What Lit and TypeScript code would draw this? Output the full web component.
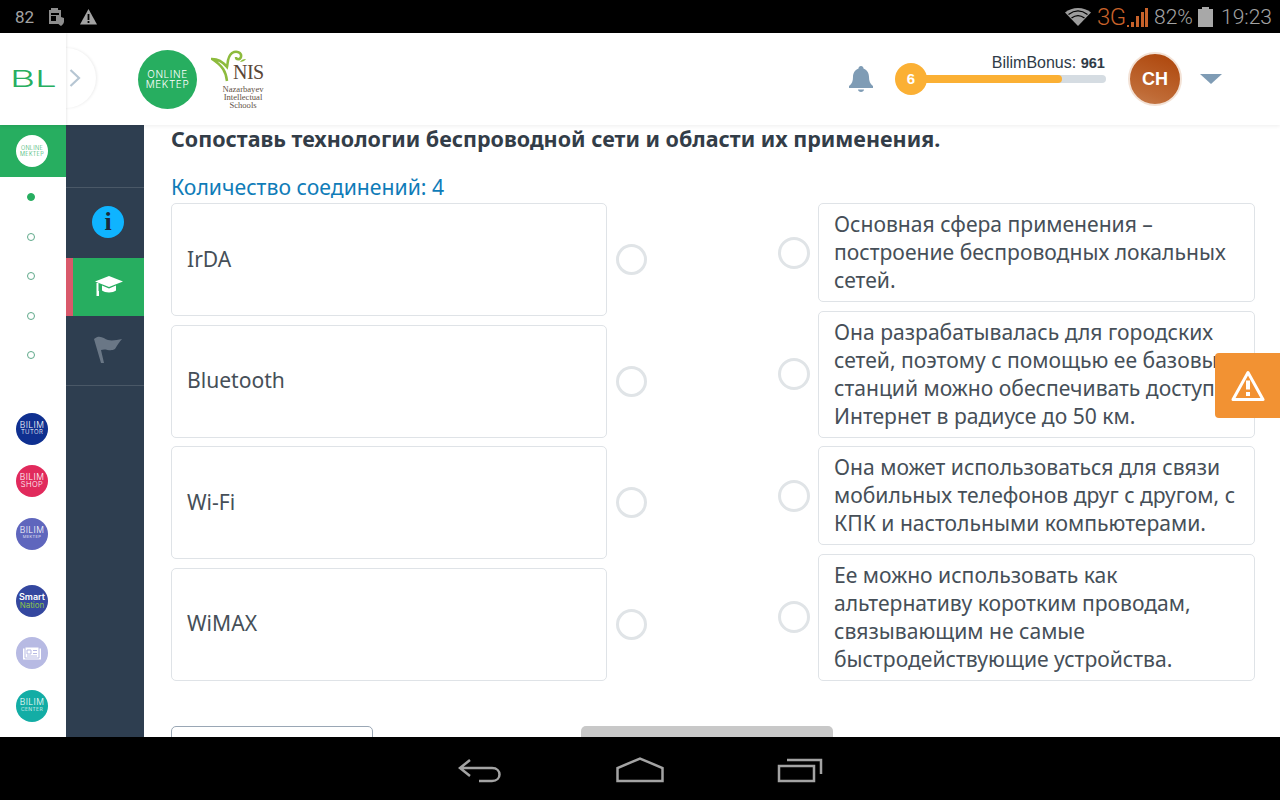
import { LitElement, html, css } from "lit";
import { customElement } from "lit/decorators.js";

const lefts = ["IrDA", "Bluetooth", "Wi-Fi", "WiMAX"];
const rights = [
  "Основная сфера применения – построение беспроводных локальных сетей.",
  "Она разрабатывалась для городских сетей, поэтому с помощью ее базовых станций можно обеспечивать доступ в Интернет в радиусе до 50 км.",
  "Она может использоваться для связи мобильных телефонов друг с другом, с КПК и настольными компьютерами.",
  "Ее можно использовать как альтернативу коротким проводам, связывающим не самые быстродействующие устройства.",
];
const apps = [
  { c: "tutor", a: "BILIM", b: "TUTOR" },
  { c: "shop", a: "BILIM", b: "SHOP" },
  { c: "market", a: "BILIM", b: "MEKTEP" },
];
const apps2 = [
  { c: "smart", a: "Smart", b: "Nation" },
  { c: "news", a: "", b: "" },
  { c: "center", a: "BILIM", b: "CENTER" },
];

@customElement("app-root")
export class AppRoot extends LitElement {
  static styles = css`
    :host { display: block; width: 1280px; height: 800px; overflow: hidden; position: relative; font-family: "Noto Sans", "Open Sans", sans-serif; background: #fff; }
    * { box-sizing: border-box; }
    .page { display: flex; flex-direction: column; height: 800px; }

    .status { height: 33px; background: #000; display: flex; align-items: center; color: #a3a3a3; font-family: Roboto, sans-serif; font-size: 21px; font-weight: 300; flex: none; }
    .status .n82 { font-size: 17px; margin-left: 15px; width: 33px; font-weight: 400; }
    .status .sp { flex: 1; }
    .status svg { display: block; flex: none; }
    .status .warn-ic { margin-left: 15px; }
    .status .g3 { color: #c8622a; font-size: 24px; margin: 0 3px 0 6px; width: 26px; letter-spacing: -0.5px; }
    .status .pct { margin-left: 6px; width: 44px; }
    .status .time { margin: 0 8px 0 8px; }

    .head { height: 92px; flex: none; background: #fff; display: flex; align-items: center; position: relative; z-index: 2; box-shadow: 0 1px 4px rgba(0,0,0,0.07); }
    .brand { width: 66px; height: 92px; flex: none; position: relative; box-shadow: 1px 0 2px rgba(0,0,0,.08); background: #fff; display: flex; align-items: center; }
    .bump { position: absolute; left: 36px; top: 15px; width: 60px; height: 60px; border-radius: 50%; background: #fff; box-shadow: 1px 0 3px rgba(0,0,0,.08); display: flex; align-items: center; justify-content: flex-end; padding-right: 15px; z-index: -1; }
    .bl { margin-left: 10px; color: #27ae60; font-family: Inter, sans-serif; font-size: 23px; line-height: 1; font-weight: 300; transform: scaleX(1.68); transform-origin: left center; }
    .om { width: 59px; height: 59px; border-radius: 50%; background: #27ae60; color: #fff; margin-left: 72px; flex: none; display: flex; flex-direction: column; align-items: center; justify-content: center; font-family: Inter, sans-serif; font-weight: 300; font-size: 10px; line-height: 10px; letter-spacing: 0.6px; }
    .nis { width: 56px; margin-left: 16px; height: 60px; flex: none; position: relative; color: #5a4a3a; font-family: "Liberation Serif", serif; text-align: center; }
    .nis svg { position: absolute; left: -2px; top: -1px; }
    .nis .big { position: absolute; left: 20px; top: 14px; font-size: 20px; line-height: 18px; letter-spacing: -0.5px; color: #5a4636; }
    .nis .small { position: absolute; left: -3px; width: 66px; top: 36px; font-size: 8.6px; line-height: 8px; color: #5f5246; }
    .hsp { flex: 1; }
    .bell { flex: none; display: block; margin-right: 22px; }
    .bonus { width: 211px; flex: none; display: flex; flex-direction: column; align-items: flex-end; align-self: flex-start; margin-top: 18px; }
    .bonus .lbl { font-family: "Liberation Sans", sans-serif; font-size: 16px; line-height: 24px; color: #2f3b47; margin: 0 1px -12px 0; height: 24px; }
    .bonus .lbl b { font-weight: 700; font-size: 14.6px; }
    .bar { width: 211px; height: 32px; display: flex; align-items: center; position: relative; padding-left: 16px; }
    .track { flex: 1; height: 8px; background: #d5dce2; border-radius: 4px; overflow: hidden; }
    .fill { width: 151px; height: 8px; background: #fbb034; border-radius: 0 4px 4px 0; }
    .lvl { position: absolute; left: 0; top: 0; width: 32px; height: 32px; border-radius: 50%; background: #fbb034; color: #fff; font: 700 15px/32px "Liberation Sans", sans-serif; text-align: center; }
    .avatar { width: 54px; height: 54px; flex: none; margin: 0 0 0 22px; border-radius: 50%; background: linear-gradient(200deg, #ad4409, #bf6a35 75%, #c67c4c); color: #fff; border: 2px solid #f3e2d6; font: 700 18px/50px "Liberation Sans", sans-serif; text-align: center; }
    .caret { width: 0; height: 0; flex: none; margin: 0 58px 0 18px; border-left: 11px solid transparent; border-right: 11px solid transparent; border-top: 10px solid #7f9cb5; }

    .body { flex: 1; min-height: 0; display: flex; overflow: hidden; }
    .rail { width: 66px; flex: none; background: #fff; display: flex; flex-direction: column; }
    .rail-top { height: 52px; background: #27ae60; display: flex; align-items: center; justify-content: center; padding-right: 2px; flex: none; }
    .mini { width: 32px; height: 32px; border-radius: 50%; background: #fff; color: #27ae60; font: 300 5.5px/6.5px Inter, sans-serif; letter-spacing: .3px; display: flex; flex-direction: column; align-items: center; justify-content: center; }
    .dots { display: flex; flex-direction: column; padding-top: .25px; }
    .dot-row { height: 39.5px; display: flex; align-items: center; justify-content: center; padding-right: 4px; }
    .dot { width: 8px; height: 8px; border-radius: 50%; border: 1px solid #5fa98a; }
    .dot.on { background: #27ae60; border-color: #27ae60; }
    .apps { display: flex; flex-direction: column; gap: 20.5px; padding-right: 2px; align-items: center; margin-top: 38px; }
    .apps.second { margin-top: 35px; }
    .app { width: 32px; height: 32px; border-radius: 50%; color: #fff; font-family: Inter, sans-serif; font-weight: 300; display: flex; flex-direction: column; align-items: center; justify-content: center; font-size: 8.5px; line-height: 7.5px; letter-spacing: .4px; }
    .app small { font-size: 6px; line-height: 6.5px; }
    .app.tutor { background: #0f3090; }
    .app.shop { background: #e12a5c; }
    .app.shop small { font-size: 7.5px; }
    .app.market { background: #5f66bd; }
    .app.market small { font-size: 4px; }
    .app.smart { background: #34479f; font-size: 9px; line-height: 9px; font-weight: 600; letter-spacing: 0; }
    .app.smart small { font-size: 8px; line-height: 8px; color: #8bc34a; font-weight: 400; }
    .app.news { background: #b7bae3; }
    .app.center { background: #13ada5; }
    .app.center small { font-size: 5px; }

    .side { width: 78px; flex: none; background: #2e3e50; display: flex; flex-direction: column; }
    .s0 { height: 63px; border-bottom: 1px solid #4a5867; flex: none; }
    .s1 { height: 70px; display: flex; align-items: center; justify-content: center; flex: none; padding-left: 6px; padding-bottom: 2px; }
    .info { width: 32px; height: 32px; border-radius: 50%; background: #0fb4ff; color: #1b2a3c; text-align: center; font: 700 26px/32px "Liberation Serif", serif; }
    .s2 { height: 58px; background: #27ae60; border-left: 7px solid #d9596b; display: flex; align-items: center; justify-content: center; flex: none; padding-bottom: 2px; }
    .s3 { height: 70px; border-bottom: 1px solid #4a5867; display: flex; align-items: center; justify-content: center; flex: none; padding-left: 5px; padding-bottom: 4px; }

    .main { flex: 1; min-width: 0; padding: 0 25px 0 27px; overflow: hidden; color: #3a444e; }
    .q { font-size: 21.5px; line-height: 28px; font-weight: 700; color: #333d48; white-space: nowrap; }
    .cnt { font-size: 21.2px; line-height: 28px; margin-top: 20px; margin-bottom: 2px; color: #0f7cb8; }
    .cols { display: flex; justify-content: space-between; }
    .col { display: flex; flex-direction: column; }
    .col.l { gap: 8.5px; }
    .col.r { gap: 8.5px; }
    .pair { display: flex; align-items: center; }
    .card { border: 1px solid #dfe3e7; border-radius: 5px; background: #fff; font-size: 21.1px; line-height: 28px; color: #464f58; }
    .l .card { width: 436px; height: 113px; display: flex; align-items: center; padding: 0 0 2px 15px; }
    .r .card { width: 437px; padding: 6px 16px 7px 15px; }
    .rad { width: 31px; height: 31px; border-radius: 50%; border: 3px solid #e0e4e7; flex: none; background: #fff; }
    .l .rad { margin-left: 9px; }
    .r .rad { margin-right: 8px; width: 32px; height: 32px; }
    .btns { display: flex; margin-top: 45.5px; gap: 208px; }
    .b1 { width: 202px; height: 50px; border: 1px solid #9aa7b5; border-radius: 5px; background: #fff; flex: none; }
    .b2 { width: 252px; height: 50px; border-radius: 5px; background: #c8c8c8; flex: none; }

    .nav { height: 63px; background: #000; flex: none; display: flex; align-items: center; justify-content: center; gap: 112.5px; padding-top: 2px; }
    .nav svg { display: block; }

    .warn { position: absolute; right: 0; top: 353px; width: 65px; height: 65px; background: #f29233; border-radius: 4px 0 0 4px; display: flex; align-items: center; justify-content: center; z-index: 5; }
  `;

  render() {
    return html`
      <div class="page">
        <div class="status">
          <span class="n82">82</span>
          <svg width="17" height="18" viewBox="0 0 17 18" fill="none"><path d="M3 0h7v2h3v7l3 1v3.500c0 2-2 3.500-3 4.500-1-.5-2-1.500-2.500-2H1V2h2z" fill="#8d8d8d"/><path d="M3 5h8v2H3zM3 8h5v5H3z" fill="#000"/></svg>
          <svg class="warn-ic" width="17" height="16" viewBox="0 0 17 16"><path d="M8.500 0L17 15.500H0z" fill="#a3a3a3"/><path d="M7.600 5h1.800v6H7.600zM7.600 12h1.800v2H7.600z" fill="#000"/></svg>
          <span class="sp"></span>
          <svg width="26" height="18" viewBox="0 0 26 18"><path d="M13 18L0 4.500C7-1.500 19-1.500 26 4.500z" fill="#9c9c9c"/><path d="M3.500 6.500c6-4.500 13-4.500 19 0" stroke="#000" stroke-width="1.300" fill="none"/><path d="M6.500 10c4-3 9-3 13 0" stroke="#000" stroke-width="1.300" fill="none"/></svg>
          <span class="g3">3G</span>
          <svg width="22" height="20" viewBox="0 0 22 20"><path d="M1 20v-2h2v2zM5 20v-5h3v5zM10 20V9h3v11zM15 20V5h3v15zM19 20V1h3v19z" fill="#c8622a"/></svg>
          <span class="pct">82%</span>
          <svg width="15" height="20" viewBox="0 0 15 20"><path d="M4 0h7v2h4v18H0V2h4z" fill="#a8a8a8"/></svg>
          <span class="time">19:23</span>
        </div>

        <div class="head">
          <div class="brand">
            <div class="bump">
              <svg width="12" height="18" viewBox="0 0 12 18" fill="none"><path d="M1.500 1l8.500 8-8.500 8" stroke="#b6c6d3" stroke-width="2.200"/></svg>
            </div>
            <span class="bl">BL</span>
          </div>
          <div class="om"><span>ONLINE</span><span>MEKTEP</span></div>
          <div class="nis">
            <svg width="36" height="34" viewBox="0 0 36 34" fill="none">
              <path d="M16 33C15 24 12 18 1 11c7 0 11 3 15 8 1-4 0-10 5-14 5-3 10 0 9 4-1 3-5 3-5 0" stroke="#8dbb3d" stroke-width="2.500"/>
              <path d="M29 14c2 0 5-1 6-3-3 0-5 1-6 3z" fill="#8dbb3d"/>
            </svg>
            <span class="big">NIS</span>
            <div class="small">Nazarbayev<br />Intellectual<br />Schools</div>
          </div>
          <span class="hsp"></span>
          <svg class="bell" width="24" height="26" viewBox="0 0 24 26"><path d="M12 0c1.500 0 2.500 1 2.500 2.500C18.500 4 20 7.500 20 11c0 4 1 7 4 9v2H0v-2c3-2 4-5 4-9 0-3.500 1.500-7 5.500-8.500C9.500 1 10.500 0 12 0z" fill="#7f9cb5"/><path d="M9 23.500h6c0 1.500-1.500 2.500-3 2.500s-3-1-3-2.500z" fill="#7f9cb5"/></svg>
          <div class="bonus">
            <div class="lbl">BilimBonus: <b>961</b></div>
            <div class="bar">
              <div class="track"><div class="fill"></div></div>
              <div class="lvl">6</div>
            </div>
          </div>
          <div class="avatar">CH</div>
          <div class="caret"></div>
        </div>

        <div class="body">
          <div class="rail">
            <div class="rail-top"><div class="mini"><span>ONLINE</span><span>MEKTEP</span></div></div>
            <div class="dots">
              ${[0, 1, 2, 3, 4].map((i) => html`<div class="dot-row"><div class="dot ${i === 0 ? "on" : ""}"></div></div>`)}
            </div>
            <div class="apps">
              ${apps.map((a) => html`<div class="app ${a.c}"><span>${a.a}</span><small>${a.b}</small></div>`)}
            </div>
            <div class="apps second">
              ${apps2.map((a) =>
                a.c === "news"
                  ? html`<div class="app news"><svg width="20" height="14" viewBox="0 0 20 14" fill="none"><path d="M1 2.500h18v11H1z" fill="#fff"/><path d="M3 1h14v11H3z" fill="#fff" stroke="#b7bae3"/><path d="M5 4h4v4H5zM11 4.500h4M11 7.500h4M5 10h10" stroke="#b7bae3"/></svg></div>`
                  : html`<div class="app ${a.c}"><span>${a.a}</span><small>${a.b}</small></div>`
              )}
            </div>
          </div>
          <div class="side">
            <div class="s0"></div>
            <div class="s1"><div class="info">i</div></div>
            <div class="s2">
              <svg width="28" height="22" viewBox="0 0 28 22"><path d="M14 1L28 6.500 14 12 0 6.500z" fill="#fff"/><path d="M7 10.500v5c3 2.500 11 2.500 14 0v-5l-7 3z" fill="#fff"/><path d="M2.500 8v8" stroke="#fff" stroke-width="2"/><path d="M1.500 16h2.500v5H1.500z" fill="#fff"/></svg>
            </div>
            <div class="s3">
              <svg width="30" height="30" viewBox="0 0 30 30"><path d="M1 5c6-5 10 0 14 1 4 1 9 0 14-1-3 3-5 7-7 10-5 3-9-1-14 1l3 13h-3z" fill="#6a7786"/></svg>
            </div>
          </div>
          <div class="main">
            <div class="q">Сопоставь технологии беспроводной сети и области их применения.</div>
            <div class="cnt">Количество соединений: 4</div>
            <div class="cols">
              <div class="col l">
                ${lefts.map((t) => html`<div class="pair"><div class="card">${t}</div><div class="rad"></div></div>`)}
              </div>
              <div class="col r">
                ${rights.map((t) => html`<div class="pair"><div class="rad"></div><div class="card">${t}</div></div>`)}
              </div>
            </div>
            <div class="btns"><div class="b1"></div><div class="b2"></div></div>
          </div>
        </div>

        <div class="nav">
          <svg width="46" height="26" viewBox="0 0 46 26" fill="none"><path d="M12 2L2 10l10 8M2 10h32c10 0 10 13 0 13H21" stroke="#a3a3a3" stroke-width="2.500" transform="translate(0 1)"/></svg>
          <svg width="48" height="26" viewBox="0 0 48 26" fill="none"><path d="M1.500 24V11L24 1.500 46.500 11v13z" stroke="#a3a3a3" stroke-width="2.500"/></svg>
          <svg width="46" height="26" viewBox="0 0 46 26" fill="none"><path d="M2 9h35v15H2z" stroke="#a3a3a3" stroke-width="2.500"/><path d="M10 3h34v14" stroke="#a3a3a3" stroke-width="2.500"/></svg>
        </div>
      </div>
      <div class="warn">
        <svg width="34" height="32" viewBox="0 0 34 32" fill="none"><path d="M17 2.500L32 29.500H2z" stroke="#fff" stroke-width="3" stroke-linejoin="round"/><path d="M17 10.500v9" stroke="#fff" stroke-width="4"/><path d="M17 22v4" stroke="#fff" stroke-width="4"/></svg>
      </div>
    `;
  }
}
